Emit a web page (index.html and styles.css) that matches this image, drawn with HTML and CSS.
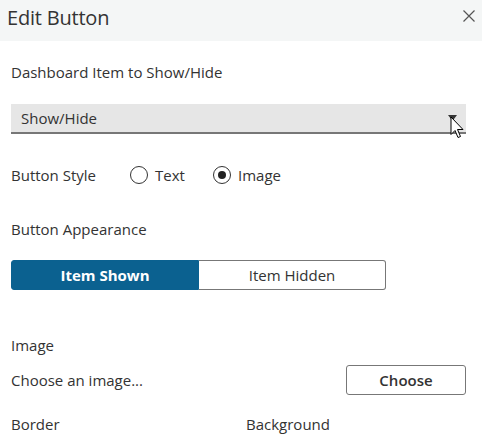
FILE: index.html
```html
<!DOCTYPE html>
<html>
<head>
<meta charset="utf-8">
<link rel="stylesheet" href="styles.css">
</head>
<body>
<div class="dialog">
  <div class="header">
    <span class="title">Edit Button</span>
    <svg class="close" width="12" height="12" viewBox="0 0 12 12"><path d="M0.5 0.5 L11.5 11.5 M11.5 0.5 L0.5 11.5" stroke="#555" stroke-width="1.2" fill="none"/></svg>
  </div>
  <div class="body">
    <div class="label l-dash">Dashboard Item to Show/Hide</div>
    <div class="select">
      <span>Show/Hide</span>
      <svg class="arrow" width="9" height="6" viewBox="0 0 9 6"><path d="M0 0 H9 L4.5 6 Z" fill="#333"/></svg>
      <svg class="cursor" width="14" height="24" viewBox="0 0 14 24"><path d="M1 1 L1 18.5 L5 14.5 L8 21.5 L10.5 20.5 L7.5 13.5 L13 13.5 Z" fill="#fff" stroke="#000" stroke-width="1" stroke-linejoin="miter"/></svg>
    </div>
    <div class="row style-row">
      <span class="row-label">Button Style</span>
      <span class="radio"></span><span class="opt">Text</span>
      <span class="radio checked"></span><span class="opt">Image</span>
    </div>
    <div class="label l-app">Button Appearance</div>
    <div class="seg">
      <div class="seg-item active">Item Shown</div>
      <div class="seg-item">Item Hidden</div>
    </div>
    <div class="label l-img">Image</div>
    <div class="choose-row">
      <span>Choose an image...</span>
      <div class="btn">Choose</div>
    </div>
    <div class="bb-row">
      <span class="col">Border</span>
      <span class="col">Background</span>
    </div>
  </div>
</div>
</body>
</html>
```
FILE: styles.css
```css
* { box-sizing: border-box; }
html, body { margin: 0; padding: 0; background: #fff; }
body {
  font-family: "Open Sans", "Liberation Sans", sans-serif;
  color: #333;
  font-size: 15px;
  width: 482px;
  height: 440px;
  overflow: hidden;
}
.header {
  height: 41px;
  background: #f4f6f6;
  display: flex;
  align-items: center;
  justify-content: space-between;
  padding: 0 7px 0 7px;
}
.title { font-size: 20px; color: #333; letter-spacing: -0.2px; margin-top: -7px; }
.close { margin-right: 0; margin-top: -9px; }
.body { padding: 0 16px 0 11px; }
.label { line-height: 18px; }
.l-dash { margin-top: 22px; }
.select {
  margin-top: 23px;
  height: 30px;
  background: #e6e6e6;
  border-bottom: 2px solid #777;
  display: flex;
  align-items: center;
  padding: 0 9px 0 10px;
  position: relative;
}
.select span { flex: 1; }
.cursor { position: absolute; right: 2px; top: 12px; }
.row { display: flex; align-items: center; }
.style-row { margin-top: 31px; height: 20px; }
.row-label { width: 119px; }
.radio {
  width: 18px; height: 18px; border-radius: 50%;
  border: 1px solid #333;
  margin-right: 7px;
  position: relative;
  flex-shrink: 0;
}
.radio.checked::after {
  content: ""; position: absolute; left: 4px; top: 4px;
  width: 8px; height: 8px; border-radius: 50%; background: #222;
}
.opt { width: 58px; }
.l-app { margin-top: 35px; }
.seg {
  margin-top: 22px;
  display: flex;
  width: 375px;
  height: 30px;
}
.seg-item {
  flex: 1;
  display: flex; align-items: center; justify-content: center;
  border: 1px solid #777;
  border-left: none;
  border-radius: 0 3px 3px 0;
}
.seg-item.active {
  background: #0b6190; color: #fff; font-weight: bold;
  border: 1px solid #0b6190;
  border-radius: 3px 0 0 3px;
}
.l-img { margin-top: 46px; }
.choose-row {
  margin-top: 11px;
  display: flex; align-items: center; justify-content: space-between;
}
.btn {
  width: 120px; height: 30px;
  border: 1px solid #777; border-radius: 3px;
  display: flex; align-items: center; justify-content: center;
  font-weight: 600;
}
.bb-row { margin-top: 19px; display: flex; }
.col { width: 235px; flex-shrink: 0; }
```
